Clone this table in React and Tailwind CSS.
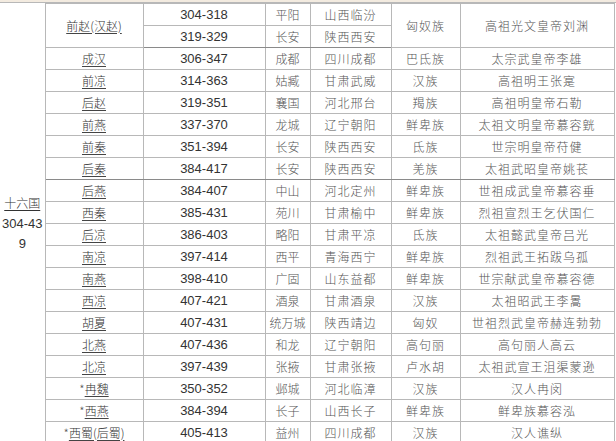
const rows = [
  { name: '前赵(汉赵)', years: ['304-318', '319-329'], cap: ['平阳', '长安'], place: ['山西临汾', '陕西西安'], eth: '匈奴族', founder: '高祖光文皇帝刘渊', dark: true },
  { name: '成汉', years: ['306-347'], cap: ['成都'], place: ['四川成都'], eth: '巴氐族', founder: '太宗武皇帝李雄' },
  { name: '前凉', years: ['314-363'], cap: ['姑臧'], place: ['甘肃武威'], eth: '汉族', founder: '高祖明王张寔' },
  { name: '后赵', years: ['319-351'], cap: ['襄国'], place: ['河北邢台'], eth: '羯族', founder: '高祖明皇帝石勒' },
  { name: '前燕', years: ['337-370'], cap: ['龙城'], place: ['辽宁朝阳'], eth: '鲜卑族', founder: '太祖文明皇帝慕容皝' },
  { name: '前秦', years: ['351-394'], cap: ['长安'], place: ['陕西西安'], eth: '氐族', founder: '世宗明皇帝苻健' },
  { name: '后秦', years: ['384-417'], cap: ['长安'], place: ['陕西西安'], eth: '羌族', founder: '太祖武昭皇帝姚苌', dark: true },
  { name: '后燕', years: ['384-407'], cap: ['中山'], place: ['河北定州'], eth: '鲜卑族', founder: '世祖成武皇帝慕容垂' },
  { name: '西秦', years: ['385-431'], cap: ['苑川'], place: ['甘肃榆中'], eth: '鲜卑族', founder: '烈祖宣烈王乞伏国仁' },
  { name: '后凉', years: ['386-403'], cap: ['略阳'], place: ['甘肃平凉'], eth: '氐族', founder: '太祖懿武皇帝吕光' },
  { name: '南凉', years: ['397-414'], cap: ['西平'], place: ['青海西宁'], eth: '鲜卑族', founder: '烈祖武王拓跋乌孤' },
  { name: '南燕', years: ['398-410'], cap: ['广固'], place: ['山东益都'], eth: '鲜卑族', founder: '世宗献武皇帝慕容德' },
  { name: '西凉', years: ['407-421'], cap: ['酒泉'], place: ['甘肃酒泉'], eth: '汉族', founder: '太祖昭武王李暠' },
  { name: '胡夏', years: ['407-431'], cap: ['统万城'], place: ['陕西靖边'], eth: '匈奴', founder: '世祖烈武皇帝赫连勃勃' },
  { name: '北燕', years: ['407-436'], cap: ['和龙'], place: ['辽宁朝阳'], eth: '高句丽', founder: '高句丽人高云' },
  { name: '北凉', years: ['397-439'], cap: ['张掖'], place: ['甘肃张掖'], eth: '卢水胡', founder: '太祖武宣王沮渠蒙逊' },
  { name: '冉魏', star: true, years: ['350-352'], cap: ['邺城'], place: ['河北临漳'], eth: '汉族', founder: '汉人冉闵' },
  { name: '西燕', star: true, years: ['384-394'], cap: ['长子'], place: ['山西长子'], eth: '鲜卑族', founder: '鲜卑族慕容泓' },
  { name: '西蜀(后蜀)', star: true, years: ['405-413'], cap: ['益州'], place: ['四川成都'], eth: '汉族', founder: '汉人谯纵' },
];

const cjk = "font-['SimSun','Noto_Sans_CJK_SC',sans-serif] font-light";
const cell = 'border border-[#b8b8b8] text-center align-middle h-[22px] p-0 leading-none';

export default function App() {
  const total = rows.reduce((n, r) => n + r.years.length, 0);
  return (
    <div className="w-[616px] h-[441px] overflow-hidden bg-white">
      <div className="h-[3px] bg-[#f3ebe0] border-b border-[#b8b8b8]" />
      <table className="w-[614px] table-fixed border-collapse text-[12px] text-[#555]">
        <colgroup>
          <col className="w-[45px]" />
          <col className="w-[98px]" />
          <col className="w-[122px]" />
          <col className="w-[45px]" />
          <col className="w-[81px]" />
          <col className="w-[69px]" />
          <col className="w-[154px]" />
        </colgroup>
        <tbody>
          {rows.map((r, i) =>
            r.years.map((y, j) => {
              const bottom = r.dark && j === r.years.length - 1 ? 'border-b-[#8a8a8a]' : '';
              const span = r.years.length;
              return (
                <tr key={`${i}-${j}`}>
                  {i === 0 && j === 0 && (
                    <td rowSpan={total} className="border-r border-[#b8b8b8] text-center align-middle p-0 text-[13px] text-[#333] leading-[20px] font-['Liberation_Sans',sans-serif]">
                      <span className={`underline decoration-[#333] underline-offset-2 text-[#333] ${cjk} text-[12px]`}>十六国</span>
                      <br />
                      304-43
                      <br />
                      9
                    </td>
                  )}
                  {j === 0 && (
                    <td rowSpan={span} className={`${cell} ${bottom} ${cjk} text-[#333]`}>
                      {r.star && <span className="text-[#555]">*</span>}
                      <span className="underline decoration-[#444] underline-offset-2">{r.name}</span>
                    </td>
                  )}
                  <td className={`${cell} ${bottom} font-['Liberation_Sans',sans-serif] text-[13px] text-[#333]`}>{y}</td>
                  <td className={`${cell} ${bottom} ${cjk}`}>{r.cap[j]}</td>
                  <td className={`${cell} ${bottom} ${cjk} tracking-[1px]`}>{r.place[j]}</td>
                  {j === 0 && (
                    <td rowSpan={span} className={`${cell} ${bottom} ${cjk} tracking-[1px]`}>{r.eth}</td>
                  )}
                  {j === 0 && (
                    <td rowSpan={span} className={`${cell} ${bottom} ${cjk} tracking-[1px]`}>{r.founder}</td>
                  )}
                </tr>
              );
            })
          )}
        </tbody>
      </table>
    </div>
  );
}
